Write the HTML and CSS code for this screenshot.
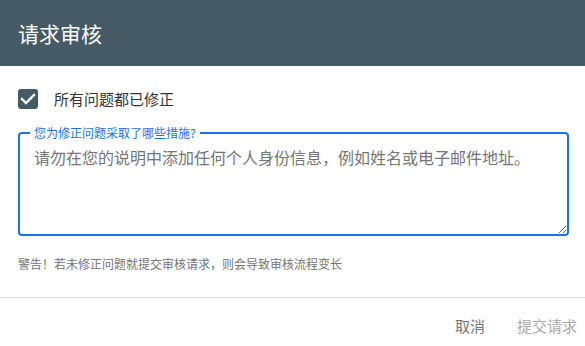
FILE: index.html
```html
<!DOCTYPE html>
<html lang="zh-CN">
<head>
<meta charset="utf-8">
<title>请求审核</title>
<link rel="stylesheet" href="styles.css">
</head>
<body>
<div class="dialog">
  <header class="dialog-header">
    <h1 class="dialog-title">请求审核</h1>
  </header>
  <div class="dialog-body">
    <label class="check-row">
      <span class="check-box">
        <svg width="20" height="20" viewBox="0 0 20 20"><polyline points="4,10 8,14 16,6" fill="none" stroke="#fff" stroke-width="2.4" stroke-linecap="square"/></svg>
      </span>
      <span class="check-label">所有问题都已修正</span>
    </label>
    <fieldset class="field">
      <legend class="field-legend">您为修正问题采取了哪些措施?</legend>
      <textarea class="field-input" placeholder="请勿在您的说明中添加任何个人身份信息，例如姓名或电子邮件地址。"></textarea>
    </fieldset>
    <p class="warning">警告！若未修正问题就提交审核请求，则会导致审核流程变长</p>
  </div>
  <footer class="dialog-actions">
    <button class="btn btn-cancel">取消</button>
    <button class="btn btn-submit" disabled>提交请求</button>
  </footer>
</div>
</body>
</html>
```
FILE: styles.css
```css
html, body {
  margin: 0;
  padding: 0;
  background: #fff;
}
body {
  font-family: "Noto Sans CJK SC", "Noto Sans", sans-serif;
  color: #212121;
}
.dialog {
  width: 585px;
  height: 346px;
  display: flex;
  flex-direction: column;
}
.dialog-header {
  height: 66px;
  background: #455a64;
  display: flex;
  align-items: center;
  padding: 0 18px;
  box-sizing: border-box;
}
.dialog-title {
  margin: 0;
  font-size: 21px;
  font-weight: 400;
  color: #fff;
  line-height: 28px;
}
.dialog-body {
  padding: 23px 16px 0 18px;
  border-bottom: 1px solid #e0e0e0;
  height: 232px;
  box-sizing: border-box;
}
.check-row {
  display: flex;
  align-items: center;
  height: 20px;
}
.check-box {
  width: 20px;
  height: 20px;
  border-radius: 3px;
  background: #455a64;
  display: flex;
}
.check-label {
  margin-left: 16px;
  font-size: 15px;
  color: #333;
  line-height: 20px;
}
.field {
  margin: 16px 0 0 0;
  padding: 0;
  border: 2px solid #1a73e8;
  border-radius: 4px;
  height: 111px;
  box-sizing: border-box;
  min-width: 0;
}
.field-legend {
  margin-left: 10px;
  padding: 0 4px;
  font-size: 12px;
  line-height: 16px;
  color: #1a73e8;
}
.field-input {
  display: block;
  width: 100%;
  height: 93px;
  box-sizing: border-box;
  border: none;
  outline: none;
  padding: 4px 14px;
  margin: 0;
  font-family: inherit;
  font-size: 16px;
  line-height: 24px;
  color: #333;
  background: transparent;
  resize: vertical;
}
.field-input::placeholder {
  color: #757575;
}
.warning {
  margin: 20px 0 0 0;
  font-size: 12px;
  line-height: 16px;
  color: #757575;
}
.dialog-actions {
  display: flex;
  justify-content: flex-end;
  gap: 16px;
  padding: 10px 0 0 0;
}
.btn {
  border: none;
  background: none;
  font-family: inherit;
  font-size: 15px;
  line-height: 36px;
  padding: 0 8px;
  cursor: pointer;
}
.btn-cancel {
  color: #757575;
}
.btn-submit {
  color: #a8a8a8;
}
```
